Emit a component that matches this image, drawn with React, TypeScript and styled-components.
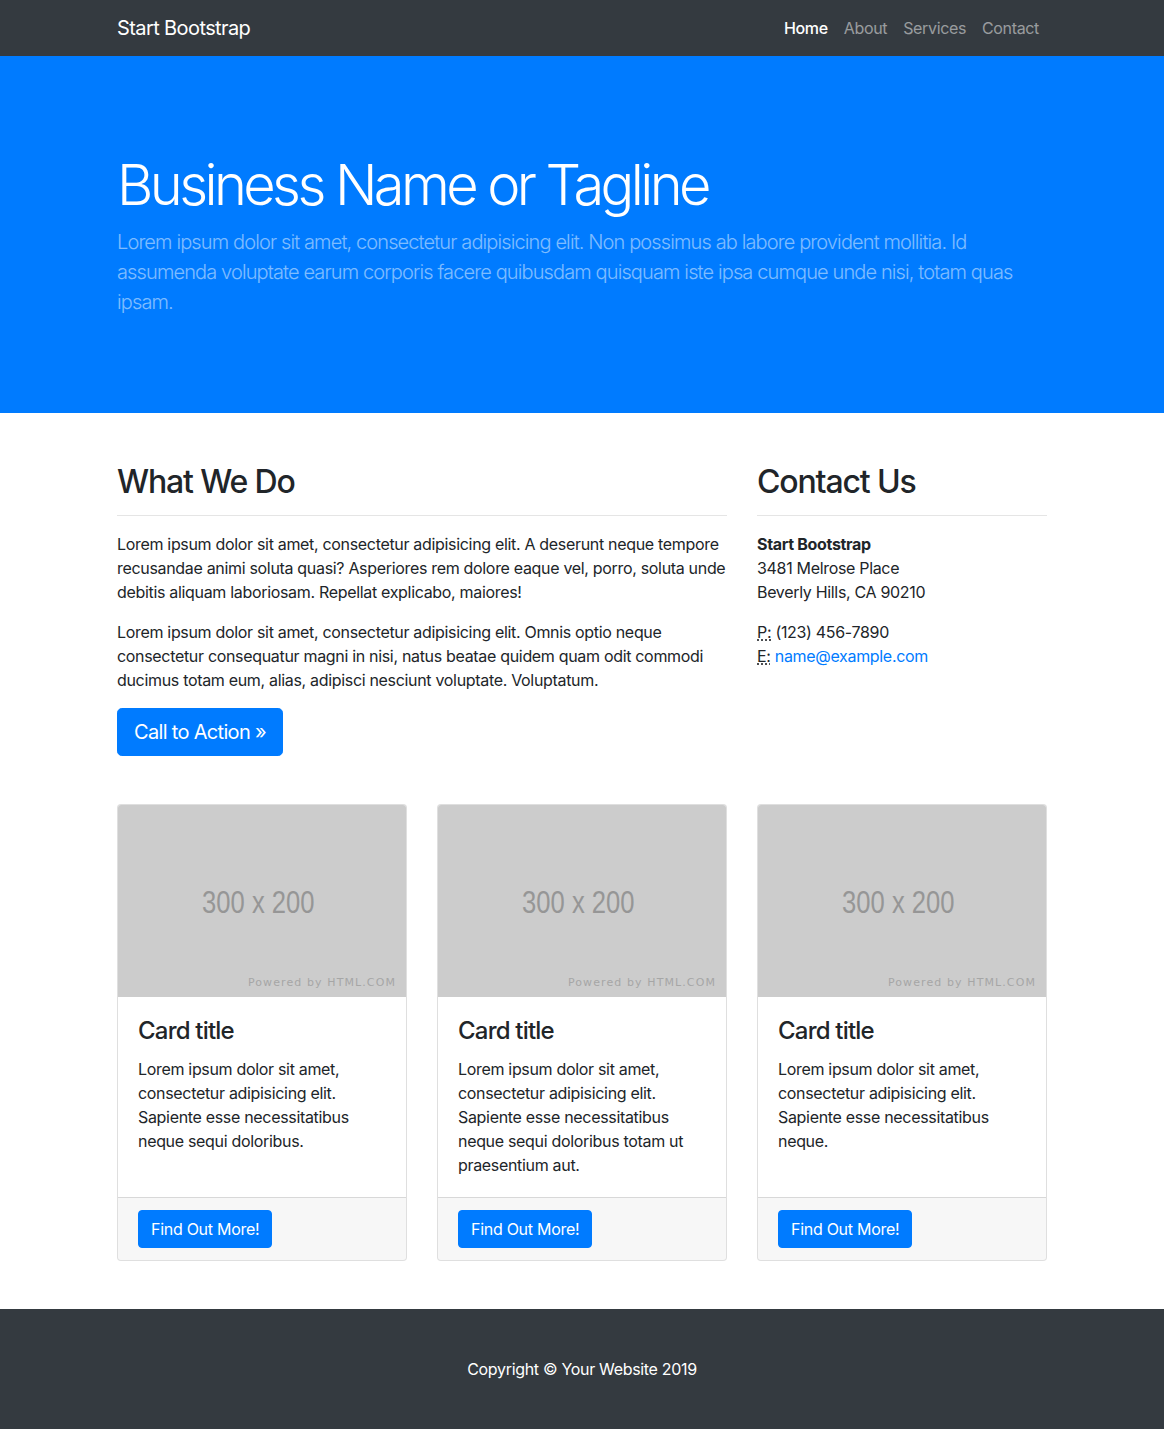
import React from "react";
import styled, { createGlobalStyle } from "styled-components";

const GlobalStyle = createGlobalStyle`
  *, *::before, *::after { box-sizing: border-box; }
  html, body { margin: 0; padding: 0; }
  body {
    font-family: Inter, "Noto Sans", "Liberation Sans", sans-serif;
    font-size: 16px;
    line-height: 1.5;
    color: #212529;
    background: #fff;
    letter-spacing: -0.32px;
  }
`;

const Container = styled.div`
  width: 960px;
  max-width: 100%;
  margin: 0 auto;
  padding: 0 15px;
`;

const NavBar = styled.nav`
  background: #343a40;
  height: 56px;
  padding: 8px 0;
`;

const NavInner = styled(Container)`
  display: flex;
  align-items: center;
  justify-content: space-between;
  height: 40px;
`;

const Brand = styled.a`
  font-size: 20px;
  line-height: 30px;
  color: #fff;
  text-decoration: none;
  font-weight: 400;
  letter-spacing: -0.6px;
`;

const NavList = styled.ul`
  display: flex;
  list-style: none;
  margin: 0;
  padding: 0;
`;

const NavLink = styled.a<{ $active?: boolean }>`
  display: block;
  padding: 8px 8px;
  font-size: 16px;
  line-height: 24px;
  color: ${(p) => (p.$active ? "#fff" : "rgba(255,255,255,0.5)")};
  font-weight: ${(p) => (p.$active ? 500 : 400)};
  text-decoration: none;
  letter-spacing: -0.35px;
`;

const Hero = styled.header`
  background: #007bff;
  padding: 48px 0;
  margin-bottom: 47px;
`;

const HeroTitle = styled.h1`
  font-size: 56px;
  font-weight: 300;
  line-height: 1.2;
  color: #fff;
  margin: 48px 0 8px;
  letter-spacing: -3.6px;
`;

const Lead = styled.p`
  font-size: 20px;
  font-weight: 300;
  line-height: 30px;
  color: rgba(255, 255, 255, 0.5);
  margin: 0 0 48px;
  letter-spacing: -0.88px;
`;

const Row = styled.div<{ $cols: string }>`
  display: grid;
  grid-template-columns: ${(p) => p.$cols};
  column-gap: 30px;
`;

const Col = styled.div`
  margin-bottom: 48px;
  min-width: 0;
`;

const SectionTitle = styled.h2`
  font-size: 32px;
  font-weight: 500;
  line-height: 1.2;
  margin: 0;
  padding-top: 3px;
  margin-bottom: -3px;
  letter-spacing: -1.15px;
`;

const Rule = styled.hr`
  border: 0;
  border-top: 1px solid rgba(0, 0, 0, 0.1);
  margin: 16px 0;
`;

const Text = styled.p`
  margin: 0 0 16px;
`;

const LargeButton = styled.a`
  display: inline-block;
  background: #007bff;
  color: #fff;
  border: 1px solid #007bff;
  border-radius: 4.8px;
  padding: 8px 16px;
  font-size: 20px;
  line-height: 30px;
  text-decoration: none;
  letter-spacing: -0.68px;
`;

const Address = styled.address`
  font-style: normal;
  margin: 0 0 16px;
`;

const Abbr = styled.abbr`
  text-decoration: underline dotted;
  text-underline-offset: 2px;
  cursor: help;
`;

const MailLink = styled.a`
  color: #007bff;
  text-decoration: none;
`;

const Card = styled.div`
  display: flex;
  flex-direction: column;
  height: 100%;
  border: 1px solid rgba(0, 0, 0, 0.125);
  border-radius: 4px;
  background: #fff;
  overflow: hidden;
`;

const Placeholder = styled.div`
  position: relative;
  height: 192px;
  background: #cccccc;
  display: flex;
  align-items: center;
  justify-content: center;
`;

const PlaceholderSize = styled.span`
  display: inline-block;
  font-family: "Liberation Sans", Arial, sans-serif;
  font-size: 32px;
  line-height: 1;
  color: #969696;
  letter-spacing: 0;
  transform: scaleX(0.8);
  margin-right: 8px;
  margin-top: 2px;
`;

const PoweredBy = styled.span`
  position: absolute;
  right: 10px;
  bottom: 5px;
  font-family: "DejaVu Sans", "Open Sans", sans-serif;
  font-size: 11px;
  letter-spacing: 1.1px;
  color: #a6a6a6;
`;

const CardBody = styled.div`
  flex: 1;
  padding: 20px;
`;

const CardTitle = styled.h4`
  font-size: 24px;
  font-weight: 500;
  line-height: 1.2;
  margin: 0 0 12px;
  letter-spacing: -0.8px;
`;

const CardText = styled.p`
  margin: 0;
`;

const CardFooter = styled.div`
  padding: 12px 20px;
  background: rgba(0, 0, 0, 0.03);
  border-top: 1px solid rgba(0, 0, 0, 0.125);
`;

const Button = styled.a`
  display: inline-block;
  background: #007bff;
  color: #fff;
  border: 1px solid #007bff;
  border-radius: 4px;
  padding: 6px 12px;
  font-size: 16px;
  line-height: 24px;
  text-decoration: none;
  letter-spacing: -0.28px;
`;

const Footer = styled.footer`
  background: #343a40;
  padding: 48px 0;
`;

const FooterText = styled.p`
  margin: 0;
  text-align: center;
  color: #fff;
  font-weight: 400;
`;

const cards = [
  "Lorem ipsum dolor sit amet, consectetur adipisicing elit. Sapiente esse necessitatibus neque sequi doloribus.",
  "Lorem ipsum dolor sit amet, consectetur adipisicing elit. Sapiente esse necessitatibus neque sequi doloribus totam ut praesentium aut.",
  "Lorem ipsum dolor sit amet, consectetur adipisicing elit. Sapiente esse necessitatibus neque.",
];

export default function App() {
  return (
    <>
      <GlobalStyle />
      <NavBar>
        <NavInner>
          <Brand href="#">Start Bootstrap</Brand>
          <NavList>
            <li><NavLink $active href="#">Home</NavLink></li>
            <li><NavLink href="#">About</NavLink></li>
            <li><NavLink href="#">Services</NavLink></li>
            <li><NavLink href="#">Contact</NavLink></li>
          </NavList>
        </NavInner>
      </NavBar>

      <Hero>
        <Container>
          <HeroTitle>Business Name or Tagline</HeroTitle>
          <Lead>
            Lorem ipsum dolor sit amet, consectetur adipisicing elit. Non possimus ab labore provident mollitia. Id
            assumenda voluptate earum corporis facere quibusdam quisquam iste ipsa cumque unde nisi, totam quas ipsam.
          </Lead>
        </Container>
      </Hero>

      <Container>
        <Row $cols="610px 290px">
          <Col>
            <SectionTitle>What We Do</SectionTitle>
            <Rule />
            <Text>
              Lorem ipsum dolor sit amet, consectetur adipisicing elit. A deserunt neque tempore recusandae animi soluta
              quasi? Asperiores rem dolore eaque vel, porro, soluta unde debitis aliquam laboriosam. Repellat explicabo,
              maiores!
            </Text>
            <Text>
              Lorem ipsum dolor sit amet, consectetur adipisicing elit. Omnis optio neque consectetur consequatur magni in
              nisi, natus beatae quidem quam odit commodi ducimus totam eum, alias, adipisci nesciunt voluptate.
              Voluptatum.
            </Text>
            <LargeButton href="#">Call to Action &raquo;</LargeButton>
          </Col>
          <Col>
            <SectionTitle>Contact Us</SectionTitle>
            <Rule />
            <Address>
              <strong>Start Bootstrap</strong>
              <br />
              3481 Melrose Place
              <br />
              Beverly Hills, CA 90210
            </Address>
            <Address>
              <Abbr title="Phone">P:</Abbr> (123) 456-7890
              <br />
              <Abbr title="Email">E:</Abbr> <MailLink href="#">name@example.com</MailLink>
            </Address>
          </Col>
        </Row>

        <Row $cols="repeat(3, 1fr)">
          {cards.map((text, i) => (
            <Col key={i}>
              <Card>
                <Placeholder>
                  <PlaceholderSize>300 x 200</PlaceholderSize>
                  <PoweredBy>Powered by HTML.COM</PoweredBy>
                </Placeholder>
                <CardBody>
                  <CardTitle>Card title</CardTitle>
                  <CardText>{text}</CardText>
                </CardBody>
                <CardFooter>
                  <Button href="#">Find Out More!</Button>
                </CardFooter>
              </Card>
            </Col>
          ))}
        </Row>
      </Container>

      <Footer>
        <Container>
          <FooterText>Copyright &copy; Your Website 2019</FooterText>
        </Container>
      </Footer>
    </>
  );
}
